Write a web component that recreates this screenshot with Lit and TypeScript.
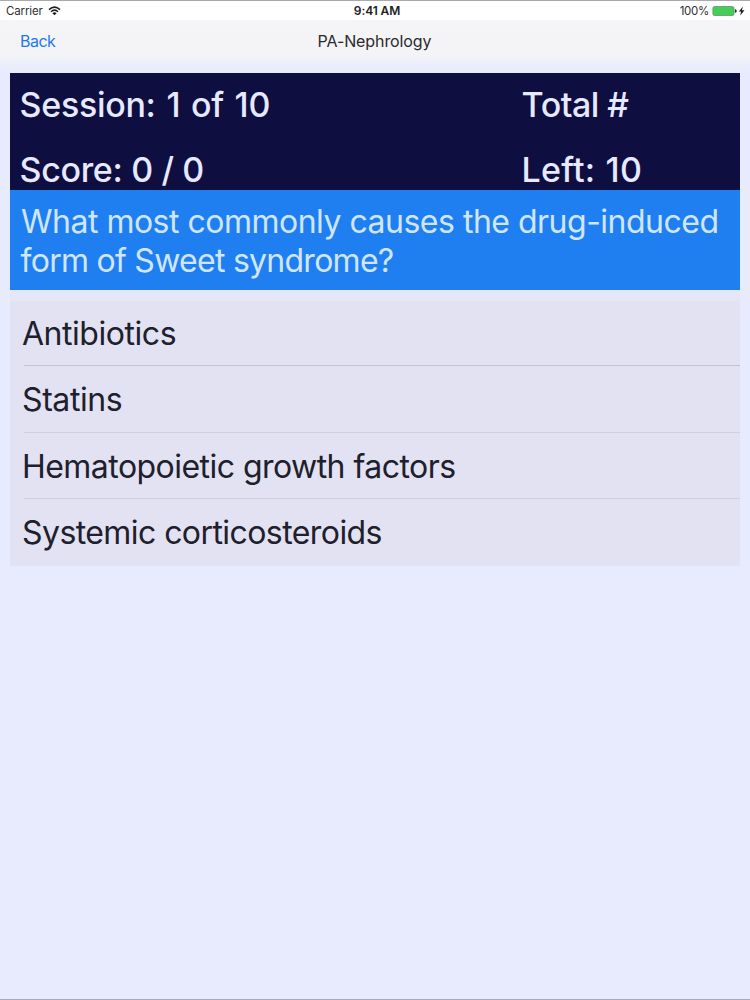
import { LitElement, html, css } from "lit";
import { customElement, property } from "lit/decorators.js";
import { styleMap } from "lit/directives/style-map.js";

interface Answer {
  text: string;
  tracking: number;
}

@customElement("status-bar")
export class StatusBar extends LitElement {
  static styles = css`
    :host {
      display: grid;
      grid-template-columns: 1fr auto 1fr;
      align-items: center;
      box-sizing: border-box;
      height: 20px;
      padding: 0 5px 0 6px;
      background: #ffffff;
      border-top: 1px solid #a9a9ae;
      font-size: 11.5px;
      line-height: 18px;
      color: #303033;
    }
    .left, .right { display: flex; align-items: center; }
    .left { letter-spacing: -0.15px; gap: 5.5px; }
    .time { font-size: 12px; font-weight: 600; letter-spacing: -0.1px; padding-left: 3px; color: #222225; }
    .right { justify-content: flex-end; gap: 3px; }
    .percent { letter-spacing: -0.3px; }
    svg { display: block; }
  `;

  render() {
    return html`
      <div class="left">
        <span>Carrier</span>
        <svg width="13" height="10" viewBox="0 0 13 10" fill="none" stroke="#1c1c1e">
          <path d="M1 3.6 Q6.5 -1.4 12 3.6" stroke-width="1.5"></path>
          <path d="M3 5.7 Q6.5 2.5 10 5.7" stroke-width="1.5"></path>
          <path d="M6.5 9.3 L4.4 7.2 Q6.5 5.5 8.6 7.2 Z" fill="#1c1c1e" stroke="none"></path>
        </svg>
      </div>
      <div class="time">9:41 AM</div>
      <div class="right">
        <span class="percent">100%</span>
        <svg width="33" height="10" viewBox="0 0 33 10">
          <rect x="0.9" y="0.5" width="21.1" height="9" rx="1.6" fill="#43cf55" stroke="#6b8f70" stroke-width="0.8"></rect>
          <path d="M22.9 3 Q24.8 3.5 24.8 5 Q24.8 6.5 22.9 7 Z" fill="#303033"></path>
          <path d="M31 0.5 L26.8 5.6 H29.1 L28.2 9.5 L32.5 4.2 H29.9 Z" fill="#1c1c1e"></path>
        </svg>
      </div>
    `;
  }
}

@customElement("nav-bar")
export class NavBar extends LitElement {
  @property() heading = "";

  static styles = css`
    :host {
      display: grid;
      grid-template-columns: 1fr auto 1fr;
      box-sizing: border-box;
      height: 53px;
      padding: 0 20px;
      background: linear-gradient(#f5f5f7 0, #f4f4f7 34px, #e9ecfd 48px, #e7ebfe 53px);
      font-size: 16px;
      line-height: 43px;
    }
    .back { color: #2079f0; letter-spacing: -0.5px; }
    .heading { color: #2a2a2d; letter-spacing: -0.1px; padding-right: 1px; }
  `;

  render() {
    return html`
      <div class="back">Back</div>
      <div class="heading">${this.heading}</div>
    `;
  }
}

@customElement("score-panel")
export class ScorePanel extends LitElement {
  static styles = css`
    :host {
      display: grid;
      grid-template-columns: 502px 1fr;
      grid-template-rows: 65px 52px;
      box-sizing: border-box;
      height: 117px;
      padding-left: 10px;
      background: #0e0e40;
      color: #e6e9ff;
      font-size: 34px;
      font-weight: 500;
      line-height: 64px;
      white-space: nowrap;
    }
    .session { letter-spacing: -0.3px; word-spacing: 2px; }
    .score { letter-spacing: -0.35px; }
    .total { letter-spacing: -0.5px; }
    .remaining { letter-spacing: 0.2px; word-spacing: 1px; }
    .session, .score { margin-left: -0.4px; }
    .total, .remaining { margin-left: -0.4px; }
  `;

  render() {
    return html`
      <div class="session">Session: 1 of 10</div>
      <div class="total">Total #</div>
      <div class="score">Score: 0 / 0</div>
      <div class="remaining">Left: 10</div>
    `;
  }
}

@customElement("answer-list")
export class AnswerList extends LitElement {
  @property({ attribute: false }) answers: Answer[] = [];

  static styles = css`
    :host {
      display: block;
      background: #e3e2f2;
      color: #20202c;
      font-size: 32px;
    }
    .row {
      margin-left: 14px;
      height: 65.4px;
      line-height: 67px;
      border-bottom: 1px solid #d0cedf;
      white-space: nowrap;
    }
    .row:first-child { height: 64.4px; line-height: 65px; border-bottom-color: #c4c2d2; }
    .row:last-child { border-bottom: none; height: 67.2px; }
    .label { margin-left: -2px; }
  `;

  render() {
    return this.answers.map(
      (a) => html`<div class="row">
        <span class="label" style=${styleMap({ letterSpacing: `${a.tracking}px` })}>${a.text}</span>
      </div>`
    );
  }
}

@customElement("app-root")
export class AppRoot extends LitElement {
  private answers: Answer[] = [
    { text: "Antibiotics", tracking: -0.46 },
    { text: "Statins", tracking: -0.4 },
    { text: "Hematopoietic growth factors", tracking: -0.54 },
    { text: "Systemic corticosteroids", tracking: -0.57 },
  ];

  static styles = css`
    :host {
      display: block;
      box-sizing: border-box;
      height: 1000px;
      overflow: hidden;
      background: #e8ebfe;
      border-bottom: 1px solid #a8a9b8;
      font-family: Inter, "Liberation Sans", sans-serif;
    }
    .content { padding: 0 10px; }
    .question {
      box-sizing: border-box;
      height: 100px;
      padding: 12px 0 0 11px;
      background: #1f7ff0;
      color: #d0e6ff;
      font-size: 32px;
      line-height: 39px;
      white-space: nowrap;
    }
    .line { display: block; letter-spacing: -0.5px; }
    .line + .line { letter-spacing: -0.73px; margin-left: -0.5px; }
    .gap { height: 11px; background: #e5e7f8; }
  `;

  render() {
    return html`
      <status-bar></status-bar>
      <nav-bar heading="PA-Nephrology"></nav-bar>
      <div class="content">
        <score-panel></score-panel>
        <div class="question">
          <span class="line">What most commonly causes the drug-induced</span>
          <span class="line">form of Sweet syndrome?</span>
        </div>
        <div class="gap"></div>
        <answer-list .answers=${this.answers}></answer-list>
      </div>
    `;
  }
}
